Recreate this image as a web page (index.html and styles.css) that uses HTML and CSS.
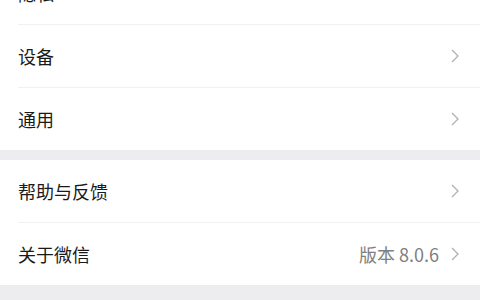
FILE: index.html
```html
<!DOCTYPE html>
<html lang="zh-CN">
<head>
<meta charset="utf-8">
<link rel="stylesheet" href="styles.css">
</head>
<body>
<div class="page">
  <div class="group">
    <div class="row"><div class="row-inner"><span class="label">隐私</span><span class="right"><svg class="chev" viewBox="0 0 8 14"><path d="M1 1l6 6-6 6"/></svg></span></div></div>
    <div class="row"><div class="row-inner"><span class="label">设备</span><span class="right"><svg class="chev" viewBox="0 0 8 14"><path d="M1 1l6 6-6 6"/></svg></span></div></div>
    <div class="row"><div class="row-inner last"><span class="label">通用</span><span class="right"><svg class="chev" viewBox="0 0 8 14"><path d="M1 1l6 6-6 6"/></svg></span></div></div>
  </div>
  <div class="group">
    <div class="row"><div class="row-inner"><span class="label">帮助与反馈</span><span class="right"><svg class="chev" viewBox="0 0 8 14"><path d="M1 1l6 6-6 6"/></svg></span></div></div>
    <div class="row"><div class="row-inner last"><span class="label">关于微信</span><span class="right"><span class="value">版本 8.0.6</span><svg class="chev" viewBox="0 0 8 14"><path d="M1 1l6 6-6 6"/></svg></span></div></div>
  </div>
</div>
</body>
</html>
```
FILE: styles.css
```css
html, body {
  margin: 0;
  padding: 0;
  background: #ededf0;
  overflow: hidden;
}
body {
  font-family: "Noto Sans CJK SC", "Noto Sans", sans-serif;
  width: 480px;
  height: 300px;
}
.page {
  margin-top: -37.5px;
  display: flex;
  flex-direction: column;
  gap: 10px;
}
.group {
  background: #ffffff;
}
.row {
  padding-left: 18px;
}
.row-inner {
  height: 62.5px;
  box-sizing: border-box;
  border-bottom: 1px solid #f1f0f4;
  display: flex;
  align-items: center;
  justify-content: space-between;
  padding-right: 21px;
}
.row-inner.last {
  border-bottom: none;
}
.label {
  font-size: 18px;
  color: #1a1a1a;
  line-height: 1;
}
.right {
  display: flex;
  align-items: center;
  gap: 12px;
}
.value {
  font-size: 18px;
  color: #808080;
  line-height: 1;
}
.chev {
  width: 8px;
  height: 14px;
  fill: none;
  stroke: #b3b3b3;
  stroke-width: 1.4;
}
```
